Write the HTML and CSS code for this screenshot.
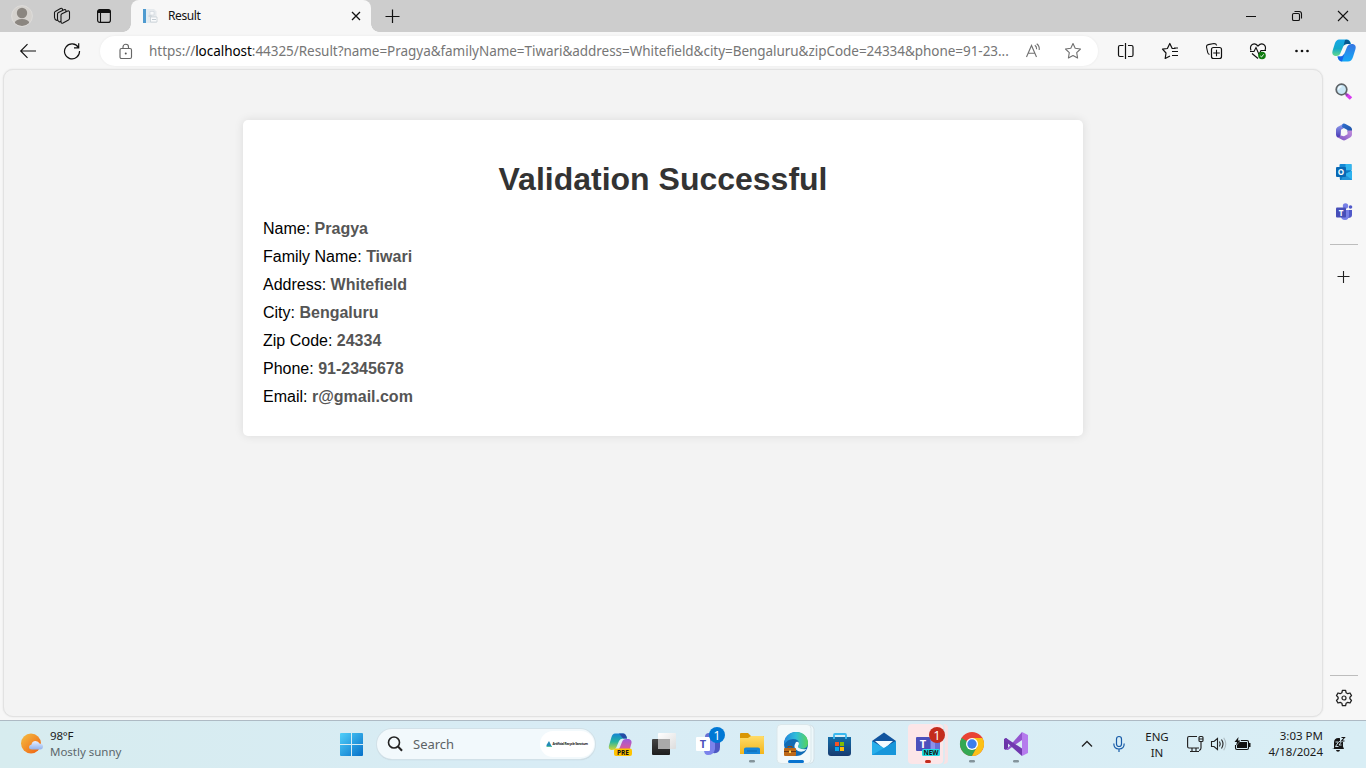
FILE: index.html
```html
<!DOCTYPE html>
<html lang="en">
<head>
<meta charset="utf-8">
<title>Result</title>
<link rel="stylesheet" href="styles.css">
</head>
<body>
<div class="desktop">
  <header class="tabstrip">
    <svg class="avatar" width="22" height="22" viewBox="0 0 22 22"><defs><clipPath id="av"><circle cx="11" cy="11" r="10"/></clipPath></defs><circle cx="11" cy="11" r="10.4" fill="#d5d2ce" stroke="#dedcda"/><g fill="#8b8680" clip-path="url(#av)"><circle cx="11" cy="8" r="5.2"/><ellipse cx="11" cy="18.3" rx="7.3" ry="4.2"/></g></svg>
    <svg class="workspaces" width="18" height="18" viewBox="0 0 18 18"><g fill="#cdcdcd" stroke="#161616" stroke-width="1.1" stroke-linejoin="round"><path d="M1.500 5.500Q1.500 4.800 2.300 4.400L7.500 1.500Q9.500 .8 9.500 2.700V10L4 13.500Q1.500 12.500 1.500 10.500Z"/><path d="M4.500 7Q4.500 6 5.500 5.500L11 2.800Q13 2.200 13 4V12L6.500 15Q4.500 14 4.500 12Z"/><path d="M8 8.300Q8 7.300 9 6.800L14.700 4Q16.500 3.500 16.500 5.300V11.300Q16.500 12.500 15.500 13L10 16Q8 16.700 8 15Z"/></g></svg>
    <svg class="tabactions" width="16" height="16" viewBox="0 0 16 16"><rect x="1.600" y="1.600" width="12.800" height="12.800" rx="2.200" fill="none" stroke="#111" stroke-width="1.200"/><path d="M1.500 4Q1.500 1.500 4 1.500H12Q14.500 1.500 14.500 4V5H1.500Z" fill="#111"/><path d="M4.500 5V14" stroke="#111" stroke-width="1.100"/></svg>
    <div class="tab">
      <svg width="16" height="16" viewBox="0 0 16 16"><path d="M1 1H4V15H1Z" fill="#4f9bd0"/><path d="M4 1H6V15H4Z" fill="#e3edf3"/><path d="M6 1H12L14.500 3.500V15H6Z" fill="#e6eaed"/><path d="M8 3.500H12V7H8Z" fill="#f8fafb" stroke="#ccd4da" stroke-width=".6"/><path d="M8.500 9H15V14H8.500Z" fill="#fafbfc" stroke="#c2cbd1" stroke-width=".7"/><path d="M6.500 8H9.500M10 11.500H14" stroke="#b5c0c8" stroke-width=".8"/></svg>
      <span class="tab-title">Result</span>
      <svg width="10" height="10" viewBox="0 0 10 10"><path d="M1 1 9 9M9 1 1 9" stroke="#111" stroke-width="1.300"/></svg>
    </div>
    <svg class="newtab" width="15" height="15" viewBox="0 0 15 15"><path d="M7.500 .5V14M.5 7.500H14.500" stroke="#111" stroke-width="1.200"/></svg>
    <div class="window-buttons">
      <svg width="46" height="32" viewBox="0 0 46 32"><path d="M18 16.500H28" stroke="#111"/></svg>
      <svg width="46" height="32" viewBox="0 0 46 32"><g fill="none" stroke="#111" stroke-width="1.100"><rect x="18.500" y="13.500" width="7" height="7" rx="1.300"/><path d="M20.500 11.500H25.200Q27.500 11.500 27.500 14V18.500"/></g></svg>
      <svg width="46" height="32" viewBox="0 0 46 32"><path d="M18 11 28 21M28 11 18 21" stroke="#111" stroke-width="1.100"/></svg>
    </div>
  </header>

  <nav class="toolbar">
    <svg class="back" width="18" height="18" viewBox="0 0 18 18"><path d="M17 9H2M8.500 2.200 1.700 9 8.500 15.800" fill="none" stroke="#111" stroke-width="1.150"/></svg>
    <svg class="reload" width="18" height="18" viewBox="0 0 18 18"><path d="M15.400 5.500A7.500 7.500 0 1 0 16.500 9M15.700 1.200V5.900H11" fill="none" stroke="#111" stroke-width="1.200"/></svg>
    <div class="address">
      <svg width="14" height="17" viewBox="0 0 14 17"><g fill="none" stroke="#666" stroke-width="1.150"><rect x="1" y="5.500" width="11.500" height="10" rx="1.500"/><path d="M4 5.500V4A2.750 2.750 0 0 1 9.500 4V5.500"/></g><circle cx="6.750" cy="10.500" r="1" fill="#555"/></svg>
      <span class="url">https://<b>localhost</b>:44325/Result?name=Pragya&amp;familyName=Tiwari&amp;address=Whitefield&amp;city=Bengaluru&amp;zipCode=24334&amp;phone=91-23...</span>
      <svg class="read" width="18" height="18" viewBox="0 0 18 18"><g fill="none" stroke="#707070" stroke-width="1.100"><path d="M1.500 15 6.500 3.500 11.500 15M3 11.200H10"/><path d="M9.800 3.200Q11.800 4.500 11.600 7.200M11.700 1.700Q14.800 4 14.200 8"/></g></svg>
      <svg class="star" width="18" height="18" viewBox="0 0 18 18"><path d="M9 1.500 11.200 6.300 16.500 7 12.700 10.700 13.600 16 9 13.500 4.400 16 5.300 10.700 1.500 7 6.800 6.300Z" fill="none" stroke="#707070" stroke-width="1.100" stroke-linejoin="round"/></svg>
    </div>
    <div class="tools">
      <svg width="44" height="36" viewBox="0 0 44 36"><path d="M19.500 12.500H16Q14.500 12.500 14.500 14V22Q14.500 23.500 16 23.500H19.500M24 12.500H27.500Q29 12.500 29 14V22Q29 23.500 27.500 23.500H24M21.500 10V26" fill="none" stroke="#111" stroke-width="1.200"/></svg>
      <svg width="44" height="36" viewBox="0 0 44 36"><path d="M27.500 15.500H24.200L21.800 10.500 19.400 15.500 14.500 16.200 18 20 17.200 25.500 22 23M24 18.500H30M24 22.500H30M26 15H30" fill="none" stroke="#111" stroke-width="1.200" stroke-linejoin="round"/></svg>
      <svg width="44" height="36" viewBox="0 0 44 36"><path d="M17.500 21.500Q16 21 15.700 19.500L14.500 14Q14.300 12 16.200 11.600L22 10.500Q24.300 10.500 24.700 12.500" fill="none" stroke="#111" stroke-width="1.100"/><rect x="19.500" y="14.500" width="10" height="11" rx="2" fill="#f7f7f7" stroke="#111" stroke-width="1.200"/><path d="M24.500 16.800V23.200M21.200 20H27.800" stroke="#111" stroke-width="1.100"/></svg>
      <svg width="44" height="36" viewBox="0 0 44 36"><g fill="none" stroke="#111" stroke-width="1.150"><path d="M15 17.500C13 12 18 8.500 22 13C26 8.500 31 12 29 17.500M16 20.500 22 25.500"/><path d="M14 18.500H18L20 14.500 23 21.500 25 17.500H30"/></g><circle cx="26" cy="22.500" r="3.800" fill="#107c10"/><path d="M24.300 22.900 25.500 24 27.700 21.300" fill="none" stroke="#fff" stroke-width=".9"/></svg>
      <svg width="44" height="36" viewBox="0 0 44 36"><g fill="#111"><circle cx="16.500" cy="18" r="1.350"/><circle cx="22" cy="18" r="1.350"/><circle cx="27.500" cy="18" r="1.350"/></g></svg>
      <svg class="copilot" width="40" height="36" viewBox="0 0 40 36"><defs><linearGradient id="c1" x1="0" y1="0" x2="0" y2="1"><stop stop-color="#17a7e8"/><stop offset=".55" stop-color="#12a9c9"/><stop offset="1" stop-color="#65d98c"/></linearGradient><linearGradient id="c2" x1="0" y1="0" x2="0" y2="1"><stop stop-color="#3675e2"/><stop offset="1" stop-color="#13a9f7"/></linearGradient></defs><path d="M14 6.500H22Q25 6.500 26 11H22Q19 11 18 14L15.500 20Q14.500 23 11.500 23H10Q6.500 22 7.500 18L10 10Q11.500 6.500 14 6.500Z" fill="url(#c1)"/><path d="M20 7Q24.500 6 25.500 11H22Q19.500 11 18.500 13Z" fill="#07588e"/><path d="M26.500 11H28Q31.500 12 30.500 16L28 24Q26.500 28.500 23 28.500H17Q13.500 28.500 12.500 23.500H16Q18.500 23 20 19L22 14Q23.500 11 26.500 11Z" fill="url(#c2)"/><path d="M12.500 23.500H16Q18 23 19.500 20.500L17 28.500Q13.500 28 12.500 23.500Z" fill="#1763e8"/></svg>
    </div>
  </nav>

  <div class="body">
    <main class="page">
      <section class="card">
        <h1>Validation Successful</h1>
        <p>Name: <strong>Pragya</strong></p>
        <p>Family Name: <strong>Tiwari</strong></p>
        <p>Address: <strong>Whitefield</strong></p>
        <p>City: <strong>Bengaluru</strong></p>
        <p>Zip Code: <strong>24334</strong></p>
        <p>Phone: <strong>91-2345678</strong></p>
        <p>Email: <strong>r@gmail.com</strong></p>
      </section>
    </main>
    <aside class="sidebar">
      <svg width="18" height="40" viewBox="0 0 18 40"><path d="M11.500 22.500 16 26.500" stroke="#d83bf0" stroke-width="3.600"/><path d="M10.500 21.500 12.500 23.500" stroke="#8b4aa8" stroke-width="2"/><circle cx="6.500" cy="17.500" r="5.300" fill="#c9e6f5" stroke="#5f6468" stroke-width="1.700"/><path d="M3.500 17.500Q3.500 14.500 6.500 14.500" stroke="#f3fbff" fill="none" stroke-width="1.300"/></svg>
      <svg width="18" height="40" viewBox="0 0 18 40"><defs><linearGradient id="m1" x1="0" y1="0" x2="0" y2="1"><stop stop-color="#93a4f0"/><stop offset="1" stop-color="#4a3ab5"/></linearGradient><linearGradient id="m2" x1="0" y1="0" x2="1" y2="1"><stop stop-color="#2f6fd0"/><stop offset="1" stop-color="#1d4f9e"/></linearGradient><linearGradient id="m3" x1="0" y1="1" x2="1" y2="0"><stop stop-color="#7b50c4"/><stop offset="1" stop-color="#c490dd"/></linearGradient></defs><path d="M9 11.500 2.500 15Q1 16 1 17.500V22.500Q1 24.500 2.500 25.200L5.500 25 6 17.800 9 16Z" fill="url(#m1)"/><path d="M7.500 12Q9 11.200 10.500 12L15.500 14.800Q17 15.800 17 17.500V22L12.500 19.500V18L7 15Z" fill="url(#m2)"/><path d="M17 18.500V22.500Q17 24.200 15.500 25.200L10.500 28Q9 28.800 7.500 28L2 25Q4 25.500 6 23.500L9 24.300 12.500 22.300V18.500Z" fill="url(#m3)"/></svg>
      <svg width="18" height="40" viewBox="0 0 18 40"><rect x="4.500" y="12" width="12" height="7" rx="1" fill="#1489d5"/><path d="M10.500 12H16.500V18H10.500Z" fill="#32b7ef"/><path d="M4 19H17V27Q17 28 16 28H5Z" fill="#0d78c2"/><path d="M10 22 17 18.500V27Q17 28 16 28H8Z" fill="#2db2ef"/><path d="M9 22 17 27.500Q16.500 28 16 28H6Z" fill="#2194d9"/><rect x="1" y="15" width="10" height="10" rx="1" fill="#0868b4"/><text x="6" y="23" text-anchor="middle" class="glyph outlook">O</text></svg>
      <svg width="18" height="40" viewBox="0 0 18 40"><circle cx="10.500" cy="14" r="2.700" fill="#7880e6"/><circle cx="15.500" cy="15" r="1.800" fill="#5059c9"/><path d="M12 18H17V23Q17 26 13 26Z" fill="#5059c9"/><path d="M6 18H14V23Q14 28 10 28 6 28 6 24Z" fill="#7880e6"/><rect x="1" y="15.500" width="10" height="10" rx="1" fill="#464eb8"/><text x="6" y="23.500" text-anchor="middle" class="glyph teams-small">T</text></svg>
      <hr>
      <svg class="add" width="14" height="14" viewBox="0 0 14 14"><path d="M6.500 1V13M.5 6.500H12.500" stroke="#222" stroke-width="1.100"/></svg>
      <hr class="lower">
      <svg class="gear" width="18" height="18" viewBox="0 0 18 18"><path d="M7.400 1.400H10.600L11.100 3.700 12.800 4.700 15 4 16.500 6.600 14.900 8.200V9.800L16.500 11.400 15 14 12.800 13.300 11.100 14.300 10.600 16.600H7.400L6.900 14.300 5.200 13.300 3 14 1.500 11.400 3.100 9.800V8.200L1.500 6.600 3 4 5.200 4.700 6.900 3.700Z" fill="none" stroke="#222" stroke-width="1.300" stroke-linejoin="round"/><circle cx="9" cy="9" r="2" fill="none" stroke="#222" stroke-width="1.200"/></svg>
    </aside>
  </div>

  <footer class="taskbar">
    <div class="weather">
      <svg width="23" height="22" viewBox="0 0 23 22"><defs><linearGradient id="sun" x1="0" y1="0" x2="1" y2="1"><stop stop-color="#f5c044"/><stop offset="1" stop-color="#ee5c0d"/></linearGradient><linearGradient id="cl" x1="0" y1="0" x2="0" y2="1"><stop stop-color="#e6efff"/><stop offset="1" stop-color="#91b2ec"/></linearGradient></defs><circle cx="10" cy="10.500" r="10" fill="url(#sun)"/><path d="M11 16.500Q8 16.500 8 14 8 12 10.500 11.500 11 8 14.500 8 17.500 8 18.500 10.500 22 10.500 22 13.500 22 16.500 19 16.500Z" fill="url(#cl)"/></svg>
      <div><span class="temp">98°F</span><span class="condition">Mostly sunny</span></div>
    </div>
    <svg class="start" width="24" height="24" viewBox="0 0 24 24"><defs><linearGradient id="win" x1="0" y1="0" x2="1" y2="1"><stop stop-color="#50d0fa"/><stop offset="1" stop-color="#0670c9"/></linearGradient></defs><path d="M1 0H11V11H0V1Q0 0 1 0ZM12 0H22Q23 0 23 1V11H12ZM0 12H11V23H1Q0 23 0 22ZM12 12H23V22Q23 23 22 23H12Z" fill="url(#win)"/></svg>
    <div class="search">
      <svg width="16" height="16" viewBox="0 0 16 16"><circle cx="7" cy="6.500" r="5.500" fill="none" stroke="#222" stroke-width="1.600"/><path d="M11 10.500 15 14.700" stroke="#222" stroke-width="2"/></svg>
      <span>Search</span>
      <div class="promo"><svg width="43" height="8" viewBox="0 0 43 8"><path d="M.5 5 3 1 4.500 4 5.500 6H.5Z" fill="#238bb6"/><path d="M.5 6H6V7H.5Z" fill="#56bfa0"/><text x="6.500" y="5.300" class="promo-text" textLength="35.500">Artificial Recycle Sanctum</text></svg></div>
    </div>
    <div class="apps">
      <svg width="44" height="48" viewBox="0 0 44 48"><defs><linearGradient id="p1" x1="0" y1="0" x2="0" y2="1"><stop stop-color="#1684d3"/><stop offset=".5" stop-color="#25b4a1"/><stop offset="1" stop-color="#d4d835"/></linearGradient><linearGradient id="p2" x1="0" y1="0" x2="0" y2="1"><stop stop-color="#9b59dd"/><stop offset="1" stop-color="#f15b83"/></linearGradient></defs><path d="M17 13.500H25Q28 13.500 29 18.500H25Q22 18.500 21 21L18.500 27Q17.500 30 14 30H13Q10 29 11 25.500L13.500 17Q14.500 13.500 17 13.500Z" fill="url(#p1)"/><path d="M21 13.500H25Q28 13.500 29 18.500H25Z" fill="#264ba5"/><path d="M28 19H31Q34 20 33.500 23L31 32H17Q20.500 31 22 27L24 22Q25 19 28 19Z" fill="url(#p2)"/><rect x="16" y="28.500" width="18" height="7.500" rx="2" fill="#ffc400"/><text x="25" y="34.700" text-anchor="middle" class="pre">PRE</text></svg>
      <svg width="44" height="48" viewBox="0 0 44 48"><defs><linearGradient id="tv" x1="0" y1="0" x2="0" y2="1"><stop stop-color="#444"/><stop offset="1" stop-color="#1d1d1d"/></linearGradient><linearGradient id="tw" x1="0" y1="0" x2="1" y2="1"><stop stop-color="#fff"/><stop offset="1" stop-color="#ddd"/></linearGradient></defs><rect x="10" y="19" width="18" height="16" rx="1" fill="url(#tv)"/><rect x="16" y="13" width="18" height="16" rx="1" fill="url(#tw)"/><path d="M16 19H28V29H16Z" fill="#a9a9a9"/></svg>
      <svg width="44" height="48" viewBox="0 0 44 48"><path d="M24 20H34V27Q34 34 27 33Z" fill="#4d57c3"/><path d="M18 20H29V29Q28 35 22 35 18 35 18 30Z" fill="#7b83eb"/><circle cx="23" cy="17" r="4" fill="#6871d2"/><rect x="10" y="17" width="14" height="14" rx="1" fill="#fff"/><text x="17" y="28" text-anchor="middle" class="teams-t purple">T</text><circle cx="31" cy="15" r="8" fill="#0078d4"/><text x="31" y="19.500" text-anchor="middle" class="badge">1</text></svg>
      <svg width="44" height="48" viewBox="0 0 44 48"><defs><linearGradient id="fo" x1="0" y1="0" x2="0" y2="1"><stop stop-color="#ffdc69"/><stop offset="1" stop-color="#f3b51b"/></linearGradient></defs><path d="M10 14Q10 13 11 13H18L21 16H33Q34 16 34 17V22H10Z" fill="#d99605"/><path d="M10 18H18L21 16H33Q34 16 34 17V34H10Z" fill="url(#fo)"/><path d="M14 34V29Q14 27.500 16 27.500H28Q30 27.500 30 29V34Z" fill="#1685d8"/><path d="M17 30.500H27V31.500H17Z" fill="#0c66ae"/><rect x="19" y="40" width="6" height="2.500" rx="1.250" fill="#84949b"/></svg>
      <svg width="44" height="48" viewBox="0 0 44 48"><defs><linearGradient id="ed" x1="0" y1="0" x2="1" y2="0"><stop stop-color="#2386dd"/><stop offset=".5" stop-color="#2fbdd9"/><stop offset="1" stop-color="#59d45c"/></linearGradient></defs><path d="M36 5Q40 6 40 9V39Q40 43 36 43.500" fill="#eef8fb" stroke="#d3e0e6"/><rect x="3" y="4.500" width="34" height="39" rx="4" fill="#f2f9fb" stroke="#dae7eb"/><circle cx="22" cy="24" r="12" fill="#116bb4"/><path d="M10 25C10 16 16 12 22 12 31 12 34 18 34 23 34 28 29 30 25 28Q23 27 25 24 25 19 19 19 13 19 10 25Z" fill="url(#ed)"/><path d="M22 22Q18 28 24 31 29 33 33 29 29 30 25 28Q23 27 25 24 25 21 22 22Z" fill="#edfaff"/><rect x="10" y="28" width="12" height="8" rx="1" fill="#bd6817"/><path d="M10 31.500H22" stroke="#6b3710"/><path d="M14 28V26.500H18V28" fill="none" stroke="#8c4710"/><rect x="15" y="30.500" width="2" height="2.500" fill="#ffd454"/><rect x="14" y="40" width="16" height="3" rx="1.500" fill="#0873cf"/></svg>
      <svg width="44" height="48" viewBox="0 0 44 48"><defs><linearGradient id="st" x1="0" y1="0" x2="0" y2="1"><stop stop-color="#126da9"/><stop offset="1" stop-color="#173b70"/></linearGradient></defs><path d="M10 17H33V33Q33 36 30 36H13Q10 36 10 33Z" fill="url(#st)"/><path d="M16 19V15Q16 14 17 14H27Q28 14 28 15V19" fill="none" stroke="#3ab8ef" stroke-width="1.800"/><path d="M17 22H21V26H17Z" fill="#f35325"/><path d="M22 22H26V26H22Z" fill="#81bc06"/><path d="M17 27H21V31H17Z" fill="#05a6f0"/><path d="M22 27H26V31H22Z" fill="#ffba08"/></svg>
      <svg width="44" height="48" viewBox="0 0 44 48"><path d="M10 21 22 12.500 34 21V27H10Z" fill="#11549e"/><path d="M13 21H31L22 29Z" fill="#f3fbff"/><path d="M10 21 22 28 34 21V35H10Z" fill="#27aeea"/><path d="M10 35 34 21V35Z" fill="#118bd3" opacity=".7"/></svg>
      <svg width="44" height="48" viewBox="0 0 44 48"><path d="M34 4H38Q42 4 42 8V40Q42 44 38 44H34Z" fill="#f8e2e4"/><path d="M34 4Q38 4 38 8V40Q38 44 34 44" stroke="#d3edf4" fill="none" stroke-width="1.500"/><rect x="2" y="4" width="35" height="40" rx="4" fill="#fce6e8"/><path d="M24 18H34V31H24Z" fill="#686fd7"/><path d="M25 18H29V30H25Z" fill="#8c91eb"/><rect x="10" y="17" width="14" height="14" rx="1" fill="#4b50bc"/><text x="17" y="28" text-anchor="middle" class="teams-t">T</text><rect x="16" y="29" width="18" height="7" rx="1.500" fill="#20dce4"/><text x="25" y="34.900" text-anchor="middle" class="new">NEW</text><circle cx="31" cy="15" r="8" fill="#c42b1c"/><text x="31" y="19.500" text-anchor="middle" class="badge">1</text><rect x="19" y="40" width="6" height="3" rx="1.500" fill="#c42b1c"/></svg>
      <svg width="44" height="48" viewBox="0 0 44 48"><circle cx="22" cy="24" r="12" fill="#e94235"/><path d="M22 24 11.600 18A12 12 0 0 0 22 36L28 25Z" fill="#34a853"/><path d="M22 18H32.400A12 12 0 0 1 22 36L27 27Z" fill="#fbc116"/><circle cx="22" cy="24" r="6" fill="#fff"/><circle cx="22" cy="24" r="4.700" fill="#3d7de9"/><rect x="19" y="40" width="6" height="2.500" rx="1.250" fill="#84949b"/></svg>
      <svg width="44" height="48" viewBox="0 0 44 48"><path d="M10 19 12 18 14 20V28L12 30 10 29Z" fill="#6a35a8"/><path d="M12 30 28 12V20L14 30Z" fill="#9455cf"/><path d="M28 12 34 15V33L28 36Z" fill="#b57bed"/><path d="M12 18 28 28.500V36L10 20Z" fill="#7038af"/><rect x="19" y="40" width="6" height="2.500" rx="1.250" fill="#84949b"/></svg>
    </div>
    <svg class="chevron" width="12" height="8" viewBox="0 0 12 8"><path d="M1 6.500 6 1.500 11 6.500" fill="none" stroke="#222" stroke-width="1.300"/></svg>
    <svg class="mic" width="12" height="18" viewBox="0 0 12 18"><g fill="none" stroke="#175ba8" stroke-width="1.200"><rect x="3.500" y="1.500" width="5" height="10" rx="2.500"/><path d="M.8 8.500Q.8 14 6 14 11.200 14 11.200 8.500M6 14V17"/></g></svg>
    <div class="language"><span>ENG</span><span>IN</span></div>
    <svg class="network" width="17" height="18" viewBox="0 0 17 18"><g fill="none" stroke="#222" stroke-width="1.150"><path d="M10 1.500H2Q.6 1.500 .6 3V11.500Q.6 13 2 13H12M5 13V16M9 13V16M3 16.500H12"/><rect x="12" y="1.500" width="4" height="5" rx="1"/><path d="M12 4H16M14 6.500V13Q14 15 12 15.500"/></g></svg>
    <svg class="sound" width="18" height="16" viewBox="0 0 18 16"><g fill="none" stroke="#222" stroke-width="1.100"><path d="M1.500 5.500H4L7.500 2.500V13.500L4 10.500H1.500ZM9.500 5.500Q11 8 9.500 10.500M11.500 3.500Q14.500 8 11.500 12.500"/><path d="M13.700 1.800Q17.800 8 13.700 14.200" stroke="#aebcc2"/></g></svg>
    <svg class="battery" width="17" height="16" viewBox="0 0 17 16"><path d="M7 4.500H13Q14.500 4.500 14.500 6V12Q14.500 13.500 13 13.500H3Q1.500 13.500 1.500 12V9" fill="none" stroke="#111" stroke-width="1.100"/><path d="M5.500 6H13V12H3V9ZM15 7H16.500V11H15ZM4.500 1 .5 6H3L2 9.500 6.500 4.500H4Z" fill="#111"/></svg>
    <div class="clock"><span>3:03 PM</span><span>4/18/2024</span></div>
    <svg class="bell" width="15" height="17" viewBox="0 0 15 17"><path d="M3 12.500V6.500Q3 2 7.500 2 12 2 12 6.500V10.500L13 13H1ZM5 14H9Q8.800 15.700 7 15.700 5.200 15.700 5 14Z" fill="#151515"/><path d="M4.500 6H7.500L4.500 10.500H7.500M8 5.500H10.500L8 9H10.500" fill="none" stroke="#d9edf5" stroke-width=".9"/><path d="M9 0H15V6H9Z" fill="#d9edf5"/><path d="M10.500 1.500H13.500L10.500 5H13.500" fill="none" stroke="#151515" stroke-width="1.100"/></svg>
  </footer>
</div>
</body>
</html>
```
FILE: styles.css
```css
* { box-sizing: border-box; }
body { margin: 0; overflow: hidden; font-family: "Noto Sans", sans-serif; }
svg { display: block; flex: none; }
.desktop { width: 1366px; height: 768px; display: flex; flex-direction: column; background: #f7f7f7; }
.tabstrip { height: 32px; flex: none; display: flex; align-items: center; background: #cdcdcd; }
.avatar { margin-left: 11px; }
.workspaces { margin-left: 20px; }
.tabactions { margin-left: 25px; }
.tab { width: 240px; height: 32px; margin-left: 19px; padding: 0 10px 0 11px; display: flex; align-items: center; background: #f7f7f7; border-radius: 8px 8px 0 0; position: relative; }
.tab::before, .tab::after { content: ""; position: absolute; bottom: 0; width: 8px; height: 8px; }
.tab::before { left: -8px; background: radial-gradient(circle at 0 0, transparent 7.5px, #f7f7f7 8px); }
.tab::after { right: -8px; background: radial-gradient(circle at 100% 0, transparent 7.5px, #f7f7f7 8px); }
.tab-title { flex: 1; margin-left: 10px; font-size: 12px; line-height: 16px; color: #111; letter-spacing: -.4px; }
.newtab { margin-left: 14px; }
.window-buttons { display: flex; margin-left: auto; }

.toolbar { height: 37px; flex: none; display: flex; align-items: center; }
.back { margin-left: 19px; }
.reload { margin-left: 26px; }
.address { width: 998px; height: 30px; margin-left: 19px; margin-top: 1px; padding-left: 19px; display: flex; align-items: center; background: #fff; border-radius: 15px; box-shadow: 0 0 3px rgba(0,0,0,.06); }
.url { width: 868px; margin-left: 16px; white-space: nowrap; font-size: 13.5px; line-height: 20px; letter-spacing: -.045px; color: #767676; }
.url b { font-weight: 400; color: #000; }
.read { margin-left: 8px; }
.star { margin-left: 21px; }
.tools { display: flex; margin-left: 6px; margin-top: 1px; }
.copilot { margin-left: 1px; }

.body { flex: 1; display: flex; min-height: 0; }
.page { width: 1320px; height: 648px; margin-left: 3px; padding-top: 50px; background: #f3f3f3; border: 1px solid #e2e2e2; border-radius: 10px; box-shadow: 0 0 2px rgba(0,0,0,.1); }
.card { width: 840px; height: 316px; margin-left: 239px; padding: 40px 20px 0; background: #fff; border-radius: 5px; box-shadow: 0 0 10px rgba(0,0,0,.1); font-family: "Liberation Sans", Arial, sans-serif; }
.card h1 { margin: 0 0 17px; font-size: 32px; line-height: 38px; text-align: center; color: #333; }
.card p { margin: 0; font-size: 16px; line-height: 28px; color: #000; }
.card strong { color: #555; }
.sidebar { flex: 1; height: 651px; display: flex; flex-direction: column; align-items: center; padding: 3px 2px 0 0; }
.sidebar hr { width: 28px; height: 1px; margin: 12px 0 0; border: 0; background: #bdbdbd; flex: none; }
.add { margin-top: 25px; }
.sidebar .lower { margin-top: auto; }
.gear { margin-top: 13px; margin-bottom: 13px; }

.taskbar { height: 48px; flex: none; display: flex; align-items: center; background: linear-gradient(90deg, #d7ecef, #d8ecf5 40%, #d9eef5); box-shadow: inset 0 1px #aebac4; color: #1b1b1b; }
.weather { width: 319px; margin-left: 21px; display: flex; align-items: center; }
.weather div { margin-left: 6px; }
.taskbar span { display: block; white-space: nowrap; font-size: 12px; line-height: 16px; }
.taskbar .temp { font-size: 11.5px; letter-spacing: -.2px; }
.taskbar .condition { color: #5b666b; font-size: 11.5px; letter-spacing: -.02px; }
.start { margin-top: 2px; }
.search { width: 218px; height: 30px; margin-left: 13px; padding: 0 1px 0 10px; display: flex; align-items: center; background: #f2f9fc; border-radius: 15px; box-shadow: 0 0 0 1px #d2e1e8, 0 1px 1px #aebdc5; }
.taskbar .search span { flex: 1; margin-left: 10px; font-size: 13px; color: #5c6265; }
.promo { width: 54px; height: 26px; border-radius: 13px; background: #fff; display: flex; align-items: center; justify-content: center; }
.apps { display: flex; margin-left: 3px; }
.chevron { margin-left: 43px; }
.mic { margin-left: 20px; }
.language { width: 40px; margin-left: 12px; margin-top: 1px; text-align: center; }
.taskbar .language span { font-size: 11.5px; }
.network { margin-left: 10px; }
.sound { margin-left: 6px; }
.battery { margin-left: 6px; }
.clock { width: 72px; margin-left: 0; text-align: right; }
.taskbar .clock span { font-size: 11.5px; }
.bell { margin-left: 8px; }
.glyph, .pre, .new, .badge, .teams-t, .promo-text { font-family: "Open Sans", sans-serif; fill: #fff; font-weight: 700; }
.outlook { font-size: 8px; }
.teams-small { font-size: 8px; }
.teams-t { font-size: 11px; }
.purple { fill: #4c50bb; }
.badge { font-size: 13px; font-weight: 400; }
.pre, .new { font-size: 6.5px; fill: #111; }
.promo-text { font-size: 3.3px; fill: #222; }
```
